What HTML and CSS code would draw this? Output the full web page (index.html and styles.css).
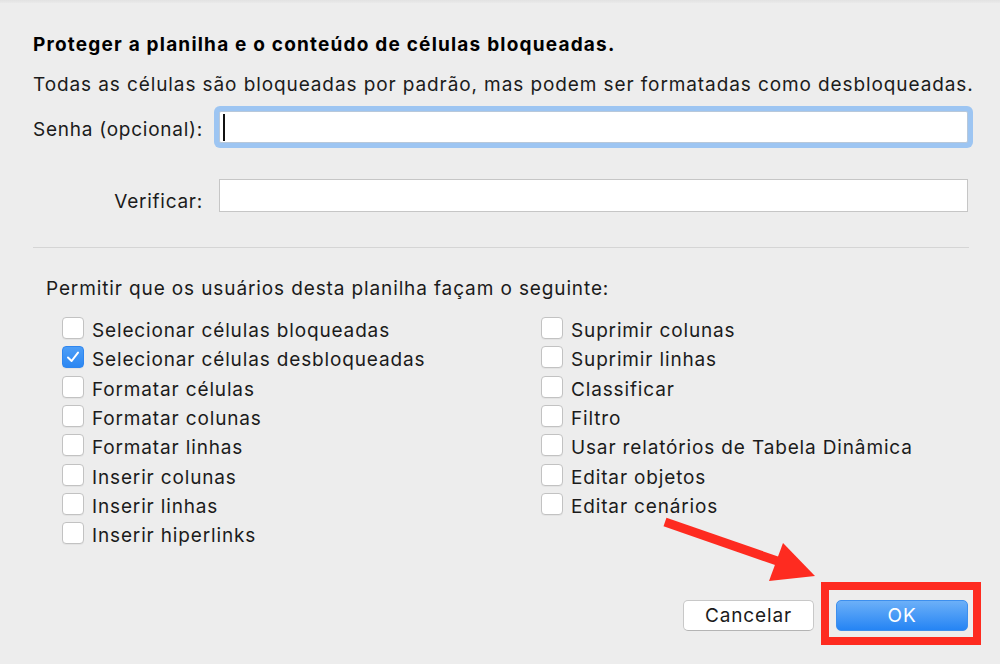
FILE: index.html
```html
<!DOCTYPE html>
<html lang="pt">
<head>
    <meta charset="UTF-8">
    <meta name="viewport" content="width=device-width, initial-scale=1.0">
    <title>Proteger Planilha</title>
    <link rel="stylesheet" href="styles.css">
</head>
<body>
    <div class="top-shade"></div>

    <main class="dialog">
        <h1 class="title">Proteger a planilha e o conteúdo de células bloqueadas.</h1>
        <p class="intro">Todas as células são bloqueadas por padrão, mas podem ser formatadas como desbloqueadas.</p>

        <!-- Password fields -->
        <div class="fields">
            <label class="field-label label-first" for="senha">Senha (opcional):</label>
            <div class="field-wrap focused">
                <input class="field" id="senha" type="password">
                <span class="caret"></span>
            </div>
            <label class="field-label label-second" for="verificar">Verificar:</label>
            <div class="field-wrap">
                <input class="field field-tall" id="verificar" type="password">
            </div>
        </div>

        <hr class="divider">

        <p class="allow">Permitir que os usuários desta planilha façam o seguinte:</p>

        <!-- Permissions -->
        <div class="options">
            <ul class="option-col">
                <li class="option"><span class="check"></span><span class="option-text">Selecionar células bloqueadas</span></li>
                <li class="option"><span class="check checked"><svg width="14" height="12" viewBox="0 0 14 12"><path d="M2 6.5 L5.6 10 L12 1.6" fill="none" stroke="#fff" stroke-width="2" stroke-linecap="round" stroke-linejoin="round"/></svg></span><span class="option-text">Selecionar células desbloqueadas</span></li>
                <li class="option"><span class="check"></span><span class="option-text">Formatar células</span></li>
                <li class="option"><span class="check"></span><span class="option-text">Formatar colunas</span></li>
                <li class="option"><span class="check"></span><span class="option-text">Formatar linhas</span></li>
                <li class="option"><span class="check"></span><span class="option-text">Inserir colunas</span></li>
                <li class="option"><span class="check"></span><span class="option-text">Inserir linhas</span></li>
                <li class="option"><span class="check"></span><span class="option-text">Inserir hiperlinks</span></li>
            </ul>
            <ul class="option-col">
                <li class="option"><span class="check"></span><span class="option-text">Suprimir colunas</span></li>
                <li class="option"><span class="check"></span><span class="option-text">Suprimir linhas</span></li>
                <li class="option"><span class="check"></span><span class="option-text">Classificar</span></li>
                <li class="option"><span class="check"></span><span class="option-text">Filtro</span></li>
                <li class="option"><span class="check"></span><span class="option-text">Usar relatórios de Tabela Dinâmica</span></li>
                <li class="option"><span class="check"></span><span class="option-text">Editar objetos</span></li>
                <li class="option"><span class="check"></span><span class="option-text">Editar cenários</span></li>
            </ul>
        </div>

        <div class="actions">
            <button class="btn">Cancelar</button>
            <button class="btn btn-primary">OK</button>
        </div>
    </main>

    <!-- Red annotation over the OK button -->
    <div class="callout-box"></div>
    <svg class="callout-arrow" width="1000" height="664" viewBox="0 0 1000 664">
        <line x1="665" y1="522" x2="786" y2="564" stroke="#fe2b20" stroke-width="9"/>
        <polygon points="783,543 769,581 815,576" fill="#fe2b20"/>
    </svg>
</body>
</html>
```

FILE: styles.css
```css
body {
    margin: 0;
    background-color: #ededed;
    font-family: Inter, "Liberation Sans", Arial, sans-serif;
    color: #1b1b1b;
    width: 1000px;
    height: 664px;
    overflow: hidden;
}
.top-shade {
    height: 3px;
    background: linear-gradient(#e2e2e2, #eaeaea);
}
.dialog {
    padding: 31px 32px 0 33px;
}
.title {
    margin: 0;
    font-size: 19px;
    line-height: 22px;
    font-weight: 700;
    color: #000;
    letter-spacing: 1.2px;
}
.intro {
    margin: 18px 0 0;
    font-size: 19px;
    line-height: 22px;
    letter-spacing: 0.9px;
    white-space: nowrap;
}
.fields {
    display: grid;
    grid-template-columns: 186px 1fr;
    row-gap: 36px;
    margin-top: 15px;
}
.field-label {
    font-size: 19px;
    line-height: 22px;
    text-align: right;
    padding-right: 16px;
    letter-spacing: 0.75px;
    white-space: nowrap;
}
.label-first {
    padding-top: 8px;
}
.label-second {
    padding-top: 12px;
}
.field-wrap {
    position: relative;
}
.field {
    display: block;
    box-sizing: border-box;
    width: 749px;
    height: 32px;
    margin: 0;
    border: 1px solid #c6c6c6;
    background: #fff;
    outline: none;
}
.field-tall {
    height: 33px;
}
.focused .field {
    border-color: #b8c8da;
    border-radius: 2px;
    box-shadow: 0 0 0 5px #9dc5f2;
}
.caret {
    position: absolute;
    left: 4px;
    top: 3px;
    width: 2px;
    height: 27px;
    background: #111;
}
.divider {
    margin: 34px 0 0;
    border: none;
    height: 1px;
    width: 936px;
    background: #d5d5d5;
}
.allow {
    margin: 30px 0 0 13px;
    font-size: 19px;
    line-height: 22px;
    letter-spacing: 0.88px;
}
.options {
    display: grid;
    grid-template-columns: 479px 1fr;
    margin-top: 17px;
    padding-left: 29px;
}
.option-col {
    list-style: none;
    margin: 0;
    padding: 0;
    display: flex;
    flex-direction: column;
    gap: 7.33px;
}
.option {
    display: flex;
    align-items: flex-start;
    gap: 8px;
    height: 22px;
}
.option-text {
    font-size: 19px;
    line-height: 22px;
    padding-top: 3px;
    letter-spacing: 0.85px;
    white-space: nowrap;
}
.check {
    flex: none;
    box-sizing: border-box;
    width: 22px;
    height: 22px;
    border: 1px solid #c2c2c2;
    border-radius: 4px;
    background: #fff;
    box-shadow: 0 1px 0 rgba(0, 0, 0, 0.04);
    display: flex;
    align-items: center;
    justify-content: center;
}
.check.checked {
    border-color: #2f86ef;
    background: linear-gradient(#4d9ef7, #2c87f2);
}
.actions {
    display: flex;
    justify-content: flex-end;
    gap: 22px;
    margin-top: 56px;
}
.btn {
    box-sizing: border-box;
    width: 131px;
    height: 31px;
    font-family: inherit;
    font-size: 19px;
    letter-spacing: 0.85px;
    color: #1b1b1b;
    background: #fff;
    border: 1px solid #c8c8c8;
    border-bottom-color: #b4b4b4;
    border-radius: 5px;
    padding: 0;
}
.btn-primary {
    width: 132px;
    color: #fff;
    border: 1px solid #3d8fee;
    background: linear-gradient(#6cb0f8, #2584f4);
}
.callout-box {
    position: absolute;
    left: 821px;
    top: 582px;
    width: 144px;
    height: 47px;
    border: 8px solid #fe2b20;
}
.callout-arrow {
    position: absolute;
    left: 0;
    top: 0;
    pointer-events: none;
}
```
